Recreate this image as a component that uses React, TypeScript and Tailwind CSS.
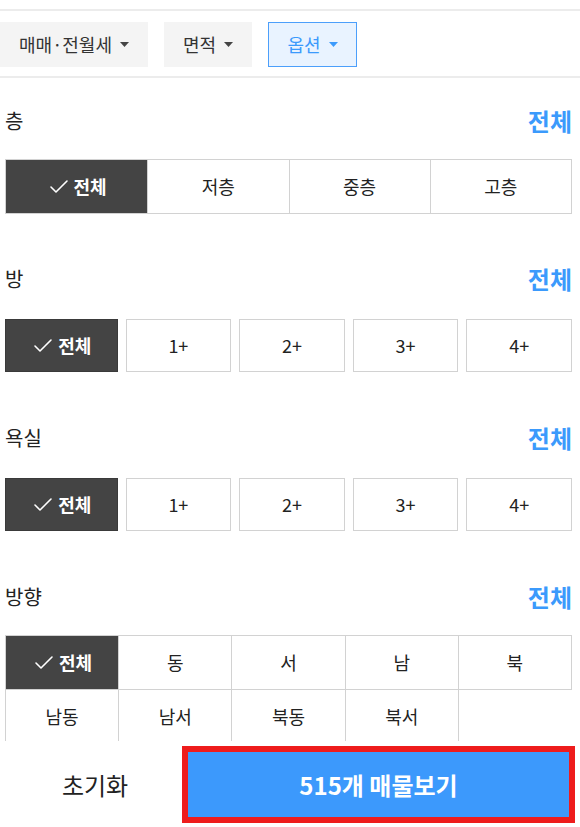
import { Check } from 'lucide-react'

const FONT = "font-['Noto_Sans_CJK_KR','Noto_Sans',sans-serif]"

function Caret({ color }: { color: string }) {
  return (
    <svg width="9" height="5" viewBox="0 0 9 5" className="ml-2">
      <polygon points="0,0 9,0 4.5,5" fill={color} />
    </svg>
  )
}

function SectionHeader({ title }: { title: string }) {
  return (
    <div className="flex h-[40px] items-center justify-between">
      <span className="text-[20px] text-[#222]">{title}</span>
      <span className="text-[24px] font-bold text-[#3b9afc]">전체</span>
    </div>
  )
}

function Selected() {
  return (
    <span className="flex items-center gap-[3px] text-[18px] font-bold text-white">
      <Check size={24} strokeWidth={1.6} />
      전체
    </span>
  )
}

const FLOORS = ['저층', '중층', '고층']
const COUNTS = ['1+', '2+', '3+', '4+']
const DIRECTIONS = ['동', '서', '남', '북', '남동', '남서', '북동', '북서']

function CountRow() {
  return (
    <div className="mt-[20px] grid grid-cols-[113fr_106fr_106fr_106fr_106fr] gap-2">
      <div className="flex h-[53px] items-center justify-center border border-[#3a3a3a] bg-[#444]">
        <Selected />
      </div>
      {COUNTS.map((c) => (
        <div
          key={c}
          className="flex h-[53px] items-center justify-center border border-[#d2d2d2] bg-white text-[18px] text-[#222]"
        >
          {c}
        </div>
      ))}
    </div>
  )
}

export default function App() {
  return (
    <div className={`flex h-[827px] flex-col bg-white ${FONT}`}>
      <div className="h-[9px]" />
      {/* 필터 바 */}
      <div className="flex h-[69px] items-center gap-4 border-t-2 border-b-2 border-[#ececec] pt-[1px]">
        <button className="flex h-[45px] w-[148px] items-center justify-center bg-[#f4f4f4] text-[18px] text-[#333]">
          매매·전월세
          <Caret color="#444" />
        </button>
        <button className="flex h-[45px] w-[88px] items-center justify-center bg-[#f4f4f4] text-[18px] text-[#333]">
          면적
          <Caret color="#444" />
        </button>
        <button className="flex h-[45px] w-[89px] items-center justify-center border border-[#4c9ffb] bg-[#e9f3ff] text-[18px] text-[#3b9afc]">
          옵션
          <Caret color="#3b9afc" />
        </button>
      </div>

      <div className="flex-1 overflow-hidden pl-[5px] pr-[8px]">
        {/* 층 */}
        <div className="pt-[23px]">
          <SectionHeader title="층" />
          <div className="mt-[18px] grid h-[55px] grid-cols-4 border border-[#d2d2d2]">
            <div className="flex items-center justify-center bg-[#444]">
              <Selected />
            </div>
            {FLOORS.map((f) => (
              <div
                key={f}
                className="flex items-center justify-center border-l border-[#d2d2d2] text-[18px] text-[#222]"
              >
                {f}
              </div>
            ))}
          </div>
        </div>

        {/* 방 */}
        <div className="pt-[45px]">
          <SectionHeader title="방" />
          <CountRow />
        </div>

        {/* 욕실 */}
        <div className="pt-[46px]">
          <SectionHeader title="욕실" />
          <CountRow />
        </div>

        {/* 방향 */}
        <div className="pt-[46px]">
          <SectionHeader title="방향" />
          <div className="mt-[18px] grid grid-cols-5 border-l border-t border-[#d2d2d2]">
            <div className="flex h-[54px] items-center justify-center border-r border-b border-[#d2d2d2] bg-[#444]">
              <Selected />
            </div>
            {DIRECTIONS.map((d) => (
              <div
                key={d}
                className="flex h-[54px] items-center justify-center border-r border-b border-[#d2d2d2] text-[18px] text-[#222]"
              >
                {d}
              </div>
            ))}
          </div>
        </div>
      </div>

      {/* 하단 버튼 */}
      <div className="flex h-[86px] items-stretch bg-white pt-[5px] pr-[5px] pb-[4px]">
        <button className="w-[182px] pl-2 text-[24px] text-[#222]">초기화</button>
        <button className="flex-1 border-[6px] border-[#ee1c1c] bg-[#3c99fc] text-[24px] font-bold text-white">
          515개 매물보기
        </button>
      </div>
    </div>
  )
}
